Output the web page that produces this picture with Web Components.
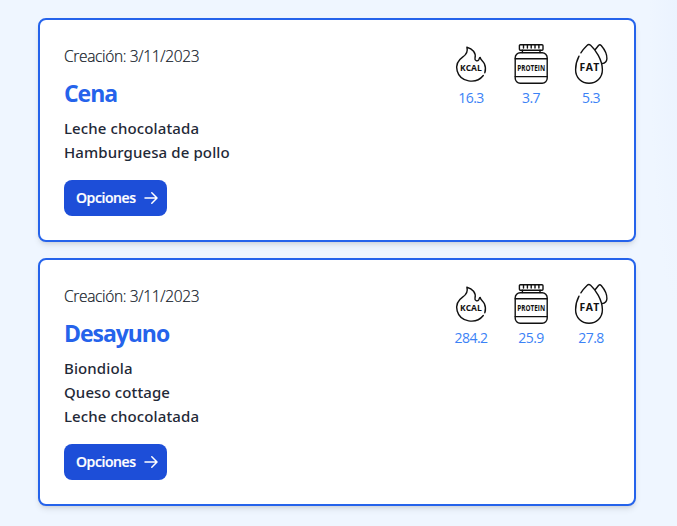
<!DOCTYPE html>
<html lang="es">
<head>
<meta charset="utf-8">
<title>Comidas</title>
<style>
html,body{margin:0;height:100%}
body{background:radial-gradient(ellipse 28px 310px at 100% 0,#ebf3ff 0,#eff6ff 100%);font-family:"Open Sans","Noto Sans",sans-serif;overflow:hidden}
</style>
</head>
<body>
<meal-list>
  <meal-card date="3/11/2023" name="Cena" kcal="16.3" protein="3.7" fat="5.3">
    <food-item>Leche chocolatada</food-item>
    <food-item>Hamburguesa de pollo</food-item>
  </meal-card>
  <meal-card date="3/11/2023" name="Desayuno" kcal="284.2" protein="25.9" fat="27.8">
    <food-item>Biondiola</food-item>
    <food-item>Queso cottage</food-item>
    <food-item>Leche chocolatada</food-item>
  </meal-card>
</meal-list>
<script>
class MealList extends HTMLElement{
  constructor(){
    super();
    this.attachShadow({mode:'open'}).innerHTML=`<style>:host{display:flex;flex-direction:column;gap:16px;padding:18px 41px 20px 38px}</style><slot></slot>`;
  }
}
class FoodItem extends HTMLElement{
  constructor(){
    super();
    this.attachShadow({mode:'open'}).innerHTML=`<style>:host{display:block;font-family:"Noto Sans",sans-serif;font-size:15px;line-height:24px;font-weight:500;color:#1f2937;letter-spacing:.11px;white-space:nowrap}</style><slot></slot>`;
  }
}
const icons={
  kcal:`<path d="M32.3 31.5C25 40.8 9.2 38 6.2 27C4.6 21 7 16.2 11.6 13.1C15.5 10.5 17.2 7.8 15.9 3.2C21.5 4.7 25.4 8.8 24 14.3C23.5 16.8 26.4 17.7 27.7 15.9C28.3 14.9 28.1 13.8 29.2 13.5C29.8 16.3 31.9 16.7 33.4 19.8C34.9 23.4 34.8 26.2 33.8 28.8"/><text x="9" y="27.3" font-size="8" font-weight="700" textLength="21.8" lengthAdjust="spacingAndGlyphs">KCAL</text>`,
  protein:`<rect x="8.4" y=".8" width="23.6" height="5.4" rx="1"/><path d="M12.5 1V4M16.4 1V4M20.2 1V4M24 1V4M27.9 1V4M11.4 6.3V8.6M29 6.3V8.6"/><rect x="4.2" y="8.7" width="32" height="30.6" rx="5"/><path d="M4.2 14.8H36.2M4.2 32.6H36.2"/><text x="6.3" y="27.2" font-size="8.4" font-weight="700" textLength="27.8" lengthAdjust="spacingAndGlyphs">PROTEIN</text>`,
  fat:`<path d="M8 12.2C5.9 16.2 4.6 20.4 4.6 25.8C4.6 33.8 10.5 39.3 18 39.3C25.5 39.3 31.4 33.8 31.4 25.8C31.4 15.8 24.4 5.6 19.6 1.2C18.3 .2 17.3 .2 16 1.4C13.7 3.6 11.5 6.2 9.9 8.8M24.1 5.8L27.5 1.5C28.5 .5 29.2 .5 30.2 1.5C33.2 5 36.1 10.1 35.9 14.7C35.8 17.2 34 19.1 31 19.6"/><text x="8.6" y="27.2" font-size="10.4" font-weight="700" textLength="19.6">FAT</text>`
};
class NutrientValue extends HTMLElement{
  connectedCallback(){
    this.attachShadow({mode:'open'}).innerHTML=`<style>
:host{display:flex;flex-direction:column;align-items:center;gap:4px;width:40px}
svg{display:block;width:40px;height:40px;overflow:visible;fill:none;stroke:#111;stroke-width:1.4;stroke-linecap:round;stroke-linejoin:round}
text{fill:#111;stroke:none;font-family:"Open Sans",sans-serif}
span{font-size:14px;line-height:20px;font-weight:400;color:#3b82f6;letter-spacing:-.5px;white-space:nowrap}
</style><svg viewBox="0 0 40 40">${icons[this.getAttribute('kind')]}</svg><span><slot></slot></span>`;
  }
}
class OptionsButton extends HTMLElement{
  constructor(){
    super();
    this.attachShadow({mode:'open'}).innerHTML=`<style>
:host{display:block}
button{display:flex;align-items:center;gap:8px;box-sizing:border-box;width:103px;height:36px;padding:0 9px 0 12px;border:0;border-radius:8px;background:#1d4ed8;color:#fff;font:600 14px/20px "Open Sans",sans-serif;letter-spacing:-.42px;text-align:left;-webkit-text-stroke:.2px #fff;white-space:nowrap}
.label{width:60px}
svg{width:14px;height:14px;flex:none;fill:none;stroke:#fff;stroke-width:1.5;stroke-linecap:round;stroke-linejoin:round}
</style><button type="button"><span class="label"><slot></slot></span><svg viewBox="0 0 14 14"><path d="M1 7H12.8M7.8 1.8L13 7L7.8 12.2"/></svg></button>`;
  }
}
class MealCard extends HTMLElement{
  connectedCallback(){
    const a=n=>this.getAttribute(n);
    this.attachShadow({mode:'open'}).innerHTML=`<style>
:host{display:flex;justify-content:space-between;align-items:flex-start;box-sizing:border-box;padding:24px 23px 24px 24px;border:2px solid #2563eb;border-radius:8px;background:#fff;box-shadow:0 4px 6px -1px rgba(0,0,0,.1),0 2px 4px -2px rgba(0,0,0,.1)}
.date{font-size:15.5px;line-height:24px;font-weight:300;color:#111827;-webkit-text-stroke:.2px #111827;letter-spacing:-.34px;white-space:nowrap}
h5{margin:9px 0 7px;font-size:23px;line-height:32px;font-weight:700;color:#2563eb;letter-spacing:-1.05px}
options-button{margin-top:16px}
.values{display:flex;gap:20px}
</style><div><div class="date">Creación: ${a('date')}</div><h5>${a('name')}</h5><slot></slot><options-button>Opciones</options-button></div>
<div class="values"><nutrient-value kind="kcal">${a('kcal')}</nutrient-value><nutrient-value kind="protein">${a('protein')}</nutrient-value><nutrient-value kind="fat">${a('fat')}</nutrient-value></div>`;
  }
}
customElements.define('food-item',FoodItem);
customElements.define('nutrient-value',NutrientValue);
customElements.define('options-button',OptionsButton);
customElements.define('meal-card',MealCard);
customElements.define('meal-list',MealList);
</script>
</body>
</html>
